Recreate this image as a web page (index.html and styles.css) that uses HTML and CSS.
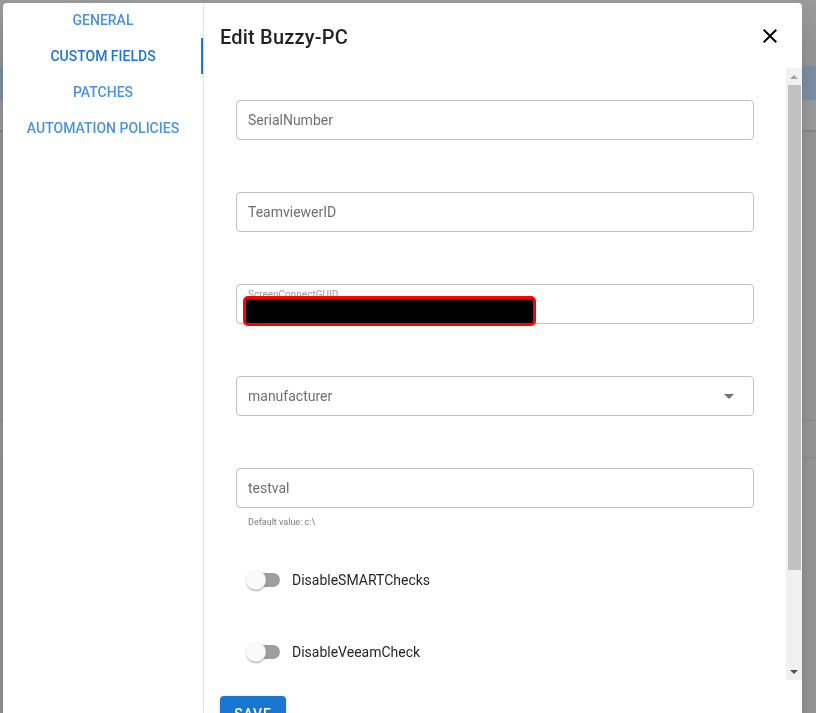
FILE: index.html
```html
<!DOCTYPE html>
<html lang="en">
<head>
<meta charset="utf-8">
<title>Edit Buzzy-PC</title>
<link rel="stylesheet" href="styles.css">
</head>
<body>
<div class="page">
  <div class="bg-header"></div>
  <div class="bg-band"></div>
  <div class="bg-sub"></div>
  <div class="bg-spacer"></div>
  <div class="bg-row"></div>
</div>

<div class="dialog">
  <nav class="tabs">
    <div class="tab-list">
      <div class="tab">General</div>
      <div class="tab tab-active">Custom Fields</div>
      <div class="tab">Patches</div>
      <div class="tab">Automation Policies</div>
    </div>
  </nav>

  <section class="main">
    <header class="header">
      <h1 class="title">Edit Buzzy-PC</h1>
      <button class="close" aria-label="Close">
        <svg viewBox="0 0 24 24" width="24" height="24"><path d="M19 6.41L17.59 5 12 10.59 6.41 5 5 6.41 10.59 12 5 17.59 6.41 19 12 13.41 17.59 19 19 17.59 13.41 12z" fill="#000"/></svg>
      </button>
    </header>

    <div class="body">
      <div class="content">
        <div class="field"><span class="placeholder">SerialNumber</span></div>
        <div class="field"><span class="placeholder">TeamviewerID</span></div>
        <div class="field field-filled">
          <span class="float-label">ScreenConnectGUID</span>
          <span class="redact"></span>
        </div>
        <div class="field field-select">
          <span class="placeholder">manufacturer</span>
          <span class="caret"><span class="caret-tri"></span></span>
        </div>
        <div class="field field-last"><span class="placeholder">testval</span></div>
        <div class="helper">Default value: c:\</div>

        <div class="toggle toggle-first">
          <span class="switch"><span class="track"></span><span class="thumb"></span></span>
          <span class="toggle-label">DisableSMARTChecks</span>
        </div>
        <div class="toggle">
          <span class="switch"><span class="track"></span><span class="thumb"></span></span>
          <span class="toggle-label">DisableVeeamCheck</span>
        </div>
      </div>
      <div class="scrollbar">
        <div class="sb-btn"><span class="tri-up"></span></div>
        <div class="sb-thumb"></div>
        <div class="sb-fill"></div>
        <div class="sb-btn"><span class="tri-down"></span></div>
      </div>
    </div>

    <footer class="footer">
      <button class="save">Save</button>
    </footer>
  </section>
</div>
</body>
</html>
```

FILE: styles.css
```css
* { box-sizing: border-box; }

html, body {
  margin: 0;
  padding: 0;
  height: 100%;
  overflow: hidden;
}

body {
  background: #9a9a9a;
  font-family: Roboto, "Liberation Sans", Arial, sans-serif;
  color: rgba(0,0,0,0.87);
}

/* dimmed page behind the dialog */
.page { display: flex; flex-direction: column; }
.bg-header { height: 66px; background: #9a9a9a; }
.bg-band { height: 34px; background: #7f93a7; }
.bg-sub { height: 32px; background: #9e9e9e; border-bottom: 2px solid #8a8a8a; }
.bg-spacer { height: 289px; background: #9a9a9a; border-bottom: 1px solid #8c8c8c; }
.bg-row { height: 37px; background: #9b9b9b; border-bottom: 1px solid #8c8c8c; }

/* dialog */
.dialog {
  position: fixed;
  left: 3px;
  top: 3px;
  width: 799px;
  height: 740px;
  background: #fff;
  border-radius: 4px;
  display: flex;
  box-shadow: 0 11px 15px -7px rgba(0,0,0,.2), 0 24px 38px 3px rgba(0,0,0,.14);
  overflow: hidden;
}

.tabs {
  width: 201px;
  flex: none;
  border-right: 1px solid #e0e0e0;
}

.tab-list {
  margin-top: -1px;
  display: flex;
  flex-direction: column;
}

.tab {
  height: 36px;
  display: flex;
  align-items: center;
  justify-content: center;
  font-size: 14px;
  font-weight: 500;
  text-transform: uppercase;
  color: #4b93df;
  letter-spacing: 0;
}

.tab-active {
  color: #1f74d0;
  box-shadow: inset -2px 0 0 #1976d2;
}

.main {
  flex: 1;
  display: flex;
  flex-direction: column;
  min-width: 0;
}

.header {
  height: 65px;
  flex: none;
  display: flex;
  align-items: center;
  justify-content: space-between;
  padding: 0 20px 0 16px;
}

.title {
  margin: 0;
  font-size: 20px;
  font-weight: 500;
  letter-spacing: 0.2px;
  color: rgba(0,0,0,0.87);
  padding-top: 2px;
}

.close {
  border: 0;
  background: none;
  padding: 0;
  width: 24px;
  height: 24px;
  display: flex;
}

.body {
  height: 612px;
  flex: none;
  display: flex;
}

.content {
  flex: 1;
  overflow: hidden;
  padding: 32px 32px 0 32px;
}

.field {
  position: relative;
  height: 40px;
  border: 1px solid #c2c2c2;
  border-radius: 4px;
  display: flex;
  align-items: center;
  padding: 0 12px 0 11px;
  margin-bottom: 52px;
}

.placeholder {
  font-size: 14px;
  color: #6f6f6f;
}

.field-filled {
  align-items: flex-start;
}

.float-label {
  font-size: 10px;
  line-height: 12px;
  color: #9a9a9a;
  padding-top: 4px;
}

.redact {
  position: absolute;
  left: 6px;
  top: 11px;
  width: 293px;
  height: 30px;
  background: #000;
  border: 3px solid #ff0000;
  border-radius: 5px;
}

.caret {
  margin-left: auto;
  width: 24px;
  height: 24px;
  display: flex;
  align-items: center;
  justify-content: center;
}

.caret-tri {
  width: 0;
  height: 0;
  border-left: 5px solid transparent;
  border-right: 5px solid transparent;
  border-top: 5px solid #737373;
}

.field-last { margin-bottom: 0; }

.helper {
  margin-top: 9px;
  padding-left: 12px;
  font-size: 9px;
  line-height: 11px;
  color: #7a7a7a;
}

.toggle {
  height: 20px;
  display: flex;
  align-items: center;
  margin-top: 52px;
}

.toggle-first { margin-top: 42px; }

.switch {
  position: relative;
  width: 34px;
  height: 20px;
  margin-left: 10px;
  flex: none;
}

.track {
  position: absolute;
  left: 4px;
  top: 3px;
  width: 30px;
  height: 14px;
  border-radius: 7px;
  background: #9e9e9e;
}

.thumb {
  position: absolute;
  left: 0;
  top: 0;
  width: 20px;
  height: 20px;
  border-radius: 50%;
  background: #fafafa;
  box-shadow: 0 2px 1px -1px rgba(0,0,0,.2), 0 1px 1px 0 rgba(0,0,0,.14), 0 1px 3px 0 rgba(0,0,0,.12);
}

.toggle-label {
  margin-left: 12px;
  font-size: 14px;
  color: rgba(0,0,0,0.87);
}

/* scrollbar */
.scrollbar {
  width: 16px;
  flex: none;
  background: #f1f1f1;
  display: flex;
  flex-direction: column;
}

.sb-btn {
  height: 17px;
  flex: none;
  display: flex;
  align-items: center;
  justify-content: center;
}

.tri-up {
  width: 0; height: 0;
  border-left: 4px solid transparent;
  border-right: 4px solid transparent;
  border-bottom: 4px solid #a3a3a3;
}

.tri-down {
  width: 0; height: 0;
  border-left: 4px solid transparent;
  border-right: 4px solid transparent;
  border-top: 4px solid #505050;
}

.sb-thumb {
  height: 485px;
  flex: none;
  margin: 0 1px 0 2px;
  background: #c1c1c1;
}

.sb-fill { flex: 1; }

.footer {
  padding: 16px;
}

.save {
  width: 66px;
  height: 36px;
  border: 0;
  border-radius: 4px;
  background: #1976d2;
  color: #fff;
  font-family: Roboto, "Liberation Sans", Arial, sans-serif;
  font-size: 14px;
  font-weight: 500;
  letter-spacing: 0.8px;
  text-transform: uppercase;
  padding: 0;
  box-shadow: 0 3px 1px -2px rgba(0,0,0,.2), 0 2px 2px 0 rgba(0,0,0,.14), 0 1px 5px 0 rgba(0,0,0,.12);
}
```
